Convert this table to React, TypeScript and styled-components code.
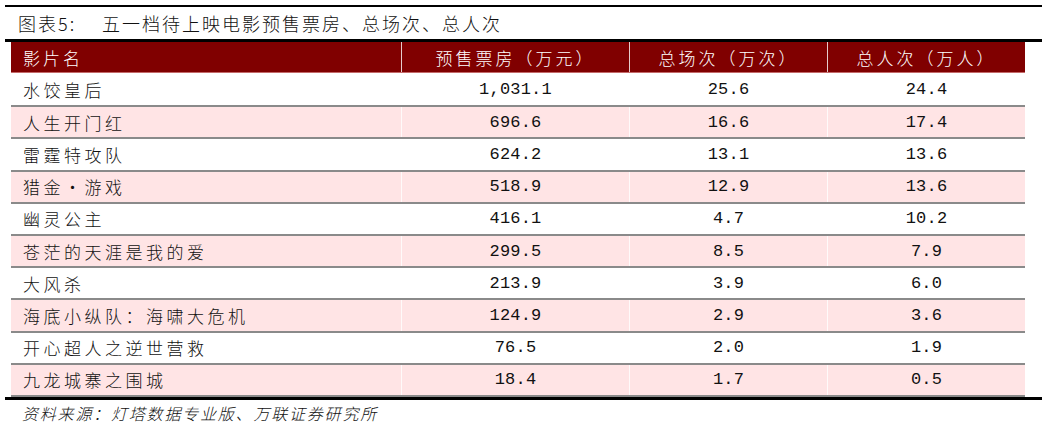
import styled, {createGlobalStyle} from "styled-components";

const GlobalStyle = createGlobalStyle`
  html, body {
    margin: 0;
    padding: 0;
    background: #fff;
  }

  body {
    font-family: "Noto Sans CJK SC", "Liberation Serif", serif;
    color: #111;
  }
`;

const Page = styled.div`
  width: 1048px;
  height: 429px;
  overflow: hidden;
  background: #fff;
`;

const Frame = styled.div`
  margin: 5px 0 0 5px;
  width: 1037px;
  border-top: 2px solid #000;
`;

const Title = styled.div`
  display: flex;
  align-items: center;
  height: 32px;
  padding-left: 13px;
  border-bottom: 3px solid #000;
  font-size: 18px;
  font-weight: 300;
  letter-spacing: 2px;
  color: #111;
`;

const TitleLabel = styled.span`
  width: 84px;
`;

const Table = styled.div`
  margin-left: 11px;
  width: 1014px;
  border-bottom: 2px solid #8a8a8a;
`;

const Row = styled.div<{ $pink?: boolean; $head?: boolean; $first?: boolean }>`
  display: grid;
  grid-template-columns: 390px 228px 198px 198px;
  box-sizing: border-box;
  height: ${p => (p.$head ? "31px" : "32.2px")};
  background: ${p => (p.$head ? "#800000" : p.$pink ? "#ffe4e5" : "#fff")};
  border-top: ${p => (p.$head || p.$first ? "none" : "2px solid #8a8a8a")};
  border-bottom: ${p => (p.$head ? "1px solid #c46a6a" : "none")};
  color: ${p => (p.$head ? "#fff" : "#111")};
`;

const Cell = styled.div<{ $left?: boolean; $num?: boolean; $head?: boolean }>`
  display: flex;
  align-items: center;
  justify-content: ${p => (p.$left ? "flex-start" : "center")};
  padding-left: ${p => (p.$left ? "12px" : "0")};
  font-family: ${p => (p.$num ? "\"Liberation Mono\", monospace" : "\"Noto Sans CJK SC\", sans-serif")};
  font-size: 17px;
  font-weight: ${p => (p.$num ? 400 : 300)};
  letter-spacing: ${p => (p.$num ? "0.2px" : p.$head ? "3px" : "3.5px")};
  white-space: nowrap;

  & + & {
    border-left: 1px solid ${p => (p.$head ? "rgba(255, 255, 255, 0.22)" : "rgba(255, 255, 255, 0.8)")};
  }
`;

const BottomRule = styled.div`
  width: 1037px;
  margin-left: 5px;
  border-top: 3px solid #000;
`;

const Source = styled.div`
  height: 26px;
  line-height: 26px;
  padding-left: 22px;
  font-size: 16px;
  font-style: italic;
  font-weight: 300;
  letter-spacing: 1.8px;
  color: #111;
`;

const headers = ["影片名", "预售票房（万元）", "总场次（万次）", "总人次（万人）"];

const films: [string, string, string, string][] = [
	["水饺皇后", "1,031.1", "25.6", "24.4"],
	["人生开门红", "696.6", "16.6", "17.4"],
	["雷霆特攻队", "624.2", "13.1", "13.6"],
	["猎金·游戏", "518.9", "12.9", "13.6"],
	["幽灵公主", "416.1", "4.7", "10.2"],
	["苍茫的天涯是我的爱", "299.5", "8.5", "7.9"],
	["大风杀", "213.9", "3.9", "6.0"],
	["海底小纵队：海啸大危机", "124.9", "2.9", "3.6"],
	["开心超人之逆世营救", "76.5", "2.0", "1.9"],
	["九龙城寨之围城", "18.4", "1.7", "0.5"],
];

export default function App() {
	return (
		<Page>
			<GlobalStyle/>
			<Frame>
				<Title>
					<TitleLabel>图表5:</TitleLabel>
					<span>五一档待上映电影预售票房、总场次、总人次</span>
				</Title>
			</Frame>
			<Table>
				<Row $head>
					{headers.map((h, i) => (
						<Cell key={h} $head $left={i === 0}>{h}</Cell>
					))}
				</Row>
				{films.map(([name, box, shows, people], i) => (
					<Row key={name} $pink={i % 2 === 1} $first={i === 0}>
						<Cell $left>{name}</Cell>
						<Cell $num>{box}</Cell>
						<Cell $num>{shows}</Cell>
						<Cell $num>{people}</Cell>
					</Row>
				))}
			</Table>
			<BottomRule/>
			<Source>资料来源：灯塔数据专业版、万联证券研究所</Source>
		</Page>
	);
}
